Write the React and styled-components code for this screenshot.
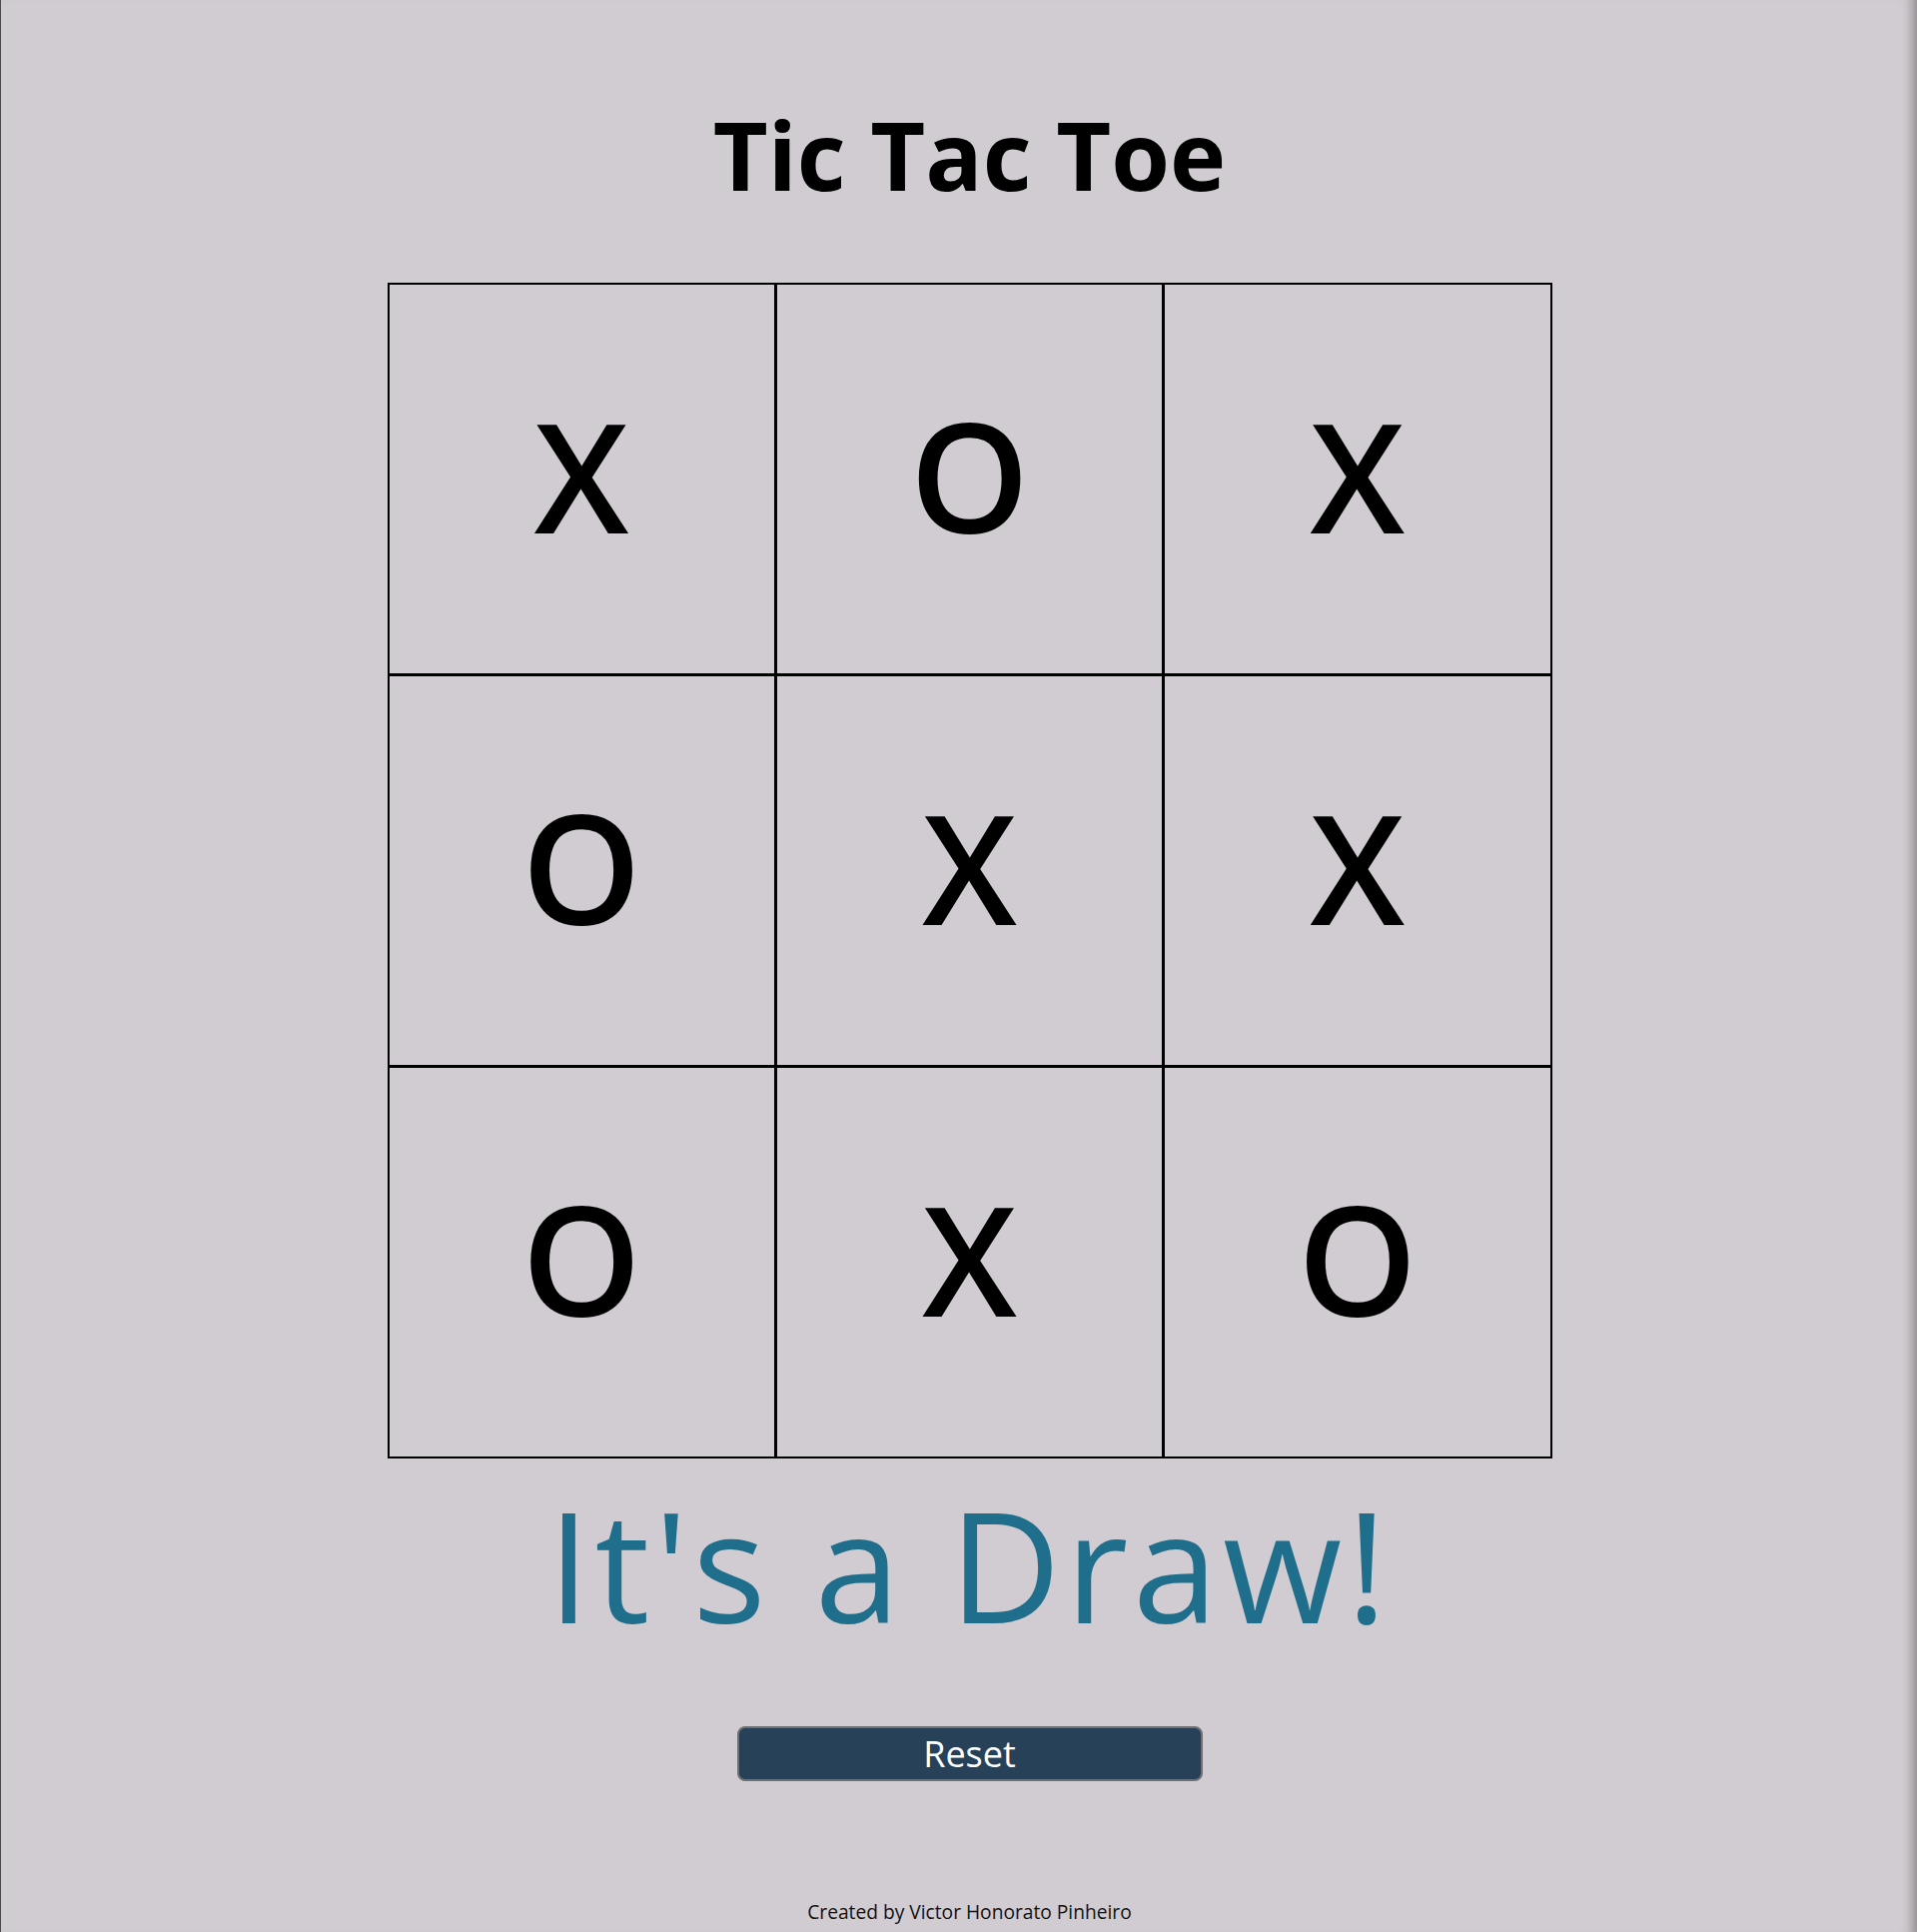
import React from 'react';
import styled, { createGlobalStyle } from 'styled-components';

const GlobalStyle = createGlobalStyle`
  html, body {
    margin: 0;
    padding: 0;
    background: #d1ccd1;
  }
  body {
    font-family: "Open Sans", "DejaVu Sans", sans-serif;
  }
`;

const Page = styled.main`
  min-height: 1934px;
  box-sizing: border-box;
  display: flex;
  flex-direction: column;
  align-items: center;
  padding-left: 21px;
  border-left: 1px solid #4a4a4a;
  box-shadow: inset -14px 0 12px -10px rgba(0, 0, 0, 0.35);
`;

const Title = styled.h1`
  margin: 89px 0 0;
  font-size: 95px;
  font-weight: 700;
  line-height: normal;
  color: #000;
`;

const Board = styled.div`
  margin-top: 64px;
  width: 1166px;
  height: 1177px;
  box-sizing: border-box;
  padding: 2px;
  display: grid;
  grid-template-columns: repeat(3, 1fr);
  grid-template-rows: repeat(3, 1fr);
  gap: 3px;
  background: #000;
`;

const Cell = styled.button`
  all: unset;
  display: flex;
  align-items: center;
  justify-content: center;
  padding-bottom: 8px;
  background: #d1ccd1;
  font-family: "Open Sans", sans-serif;
  font-size: 152px;
  font-weight: 600;
  line-height: 1;
  color: #000;
  cursor: pointer;
`;

const Status = styled.p`
  margin: 0;
  font-size: 154px;
  line-height: normal;
  letter-spacing: 4.5px;
  color: #1f6e8c;
`;

const ResetButton = styled.button`
  margin-top: 58px;
  width: 466px;
  height: 55px;
  box-sizing: border-box;
  border: 2px solid #707070;
  border-radius: 8px;
  background: #274159;
  color: #fff;
  font-family: "Open Sans", sans-serif;
  font-size: 36px;
  line-height: 1;
  cursor: pointer;
`;

const Footer = styled.footer`
  margin-top: 117px;
  font-size: 19.2px;
  line-height: normal;
  color: #111;
`;

const board = ['X', 'O', 'X', 'O', 'X', 'X', 'O', 'X', 'O'];

const App = () => {
  const [cells, setCells] = React.useState(board);

  return (
    <>
      <GlobalStyle />
      <Page>
        <Title>Tic Tac Toe</Title>
        <Board>
          {cells.map((value, i) => (
            <Cell key={i}>{value}</Cell>
          ))}
        </Board>
        <Status>It's a Draw!</Status>
        <ResetButton onClick={() => setCells(Array(9).fill(''))}>Reset</ResetButton>
        <Footer>Created by Victor Honorato Pinheiro</Footer>
      </Page>
    </>
  );
};

export default App;
